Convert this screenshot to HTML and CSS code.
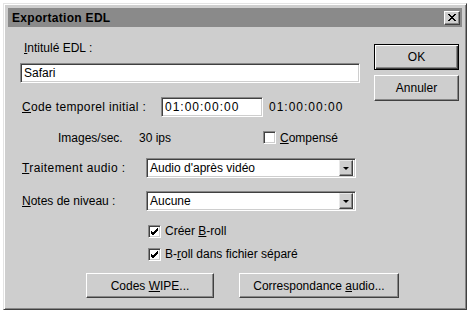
FILE: index.html
```html
<!DOCTYPE html>
<html lang="fr">

<head>
    <meta charset="UTF-8">
    <title>Exportation EDL</title>
    <link rel="stylesheet" href="styles.css">
</head>

<body>
    <div class="window">
        <div class="titlebar">
            <span class="title">Exportation EDL</span>
            <span class="close">
                <svg width="8" height="7" viewBox="0 0 8 7">
                    <path d="M0 0 L7 7 M1 0 L8 7 M7 0 L0 7 M8 0 L1 7" stroke="#000" stroke-width="1" fill="none"/>
                </svg>
            </span>
        </div>

        <div class="content">
            <div class="main">
                <div class="fields">
                    <div class="label-top"><u>I</u>ntitulé EDL :</div>
                    <div class="field name-field">Safari</div>

                    <div class="row code-row">
                        <span class="label code-label"><u>C</u>ode temporel initial :</span>
                        <span class="field tc-field"><span class="tc">01:00:00:00</span></span>
                        <span class="tc tc-end">01:00:00:00</span>
                    </div>

                    <div class="row fps-row">
                        <span class="fps-label">Images/sec.</span>
                        <span class="fps-value">30 ips</span>
                        <span class="check"></span>
                        <span class="check-text"><u>C</u>ompensé</span>
                    </div>

                    <div class="row select-row">
                        <span class="label select-label audio-label"><u>T</u>raitement audio :</span>
                        <span class="field select">
                            <span class="select-text">Audio d'après vidéo</span>
                            <span class="drop"><span class="arrow"></span></span>
                        </span>
                    </div>

                    <div class="row select-row notes-row">
                        <span class="label select-label"><u>N</u>otes de niveau :</span>
                        <span class="field select">
                            <span class="select-text">Aucune</span>
                            <span class="drop"><span class="arrow"></span></span>
                        </span>
                    </div>

                    <div class="row check-row first-check">
                        <span class="check checked">
                            <svg width="9" height="9" viewBox="0 0 9 9">
                                <path d="M1 4 L3 6 L8 1 M1 5 L3 7 L8 2 M1 6 L3 8 L8 3" stroke="#000" stroke-width="1" fill="none"/>
                            </svg>
                        </span>
                        <span class="check-text">Créer <u>B</u>-roll</span>
                    </div>

                    <div class="row check-row">
                        <span class="check checked">
                            <svg width="9" height="9" viewBox="0 0 9 9">
                                <path d="M1 4 L3 6 L8 1 M1 5 L3 7 L8 2 M1 6 L3 8 L8 3" stroke="#000" stroke-width="1" fill="none"/>
                            </svg>
                        </span>
                        <span class="check-text">B-<u>r</u>oll dans fichier séparé</span>
                    </div>
                </div>

                <div class="side">
                    <span class="btn btn-default"><span>OK</span></span>
                    <span class="btn btn-side"><span>Annuler</span></span>
                </div>
            </div>

            <div class="footer">
                <span class="btn btn-wipe"><span>Codes <u>W</u>IPE...</span></span>
                <span class="btn btn-audio"><span>Correspondance <u>a</u>udio...</span></span>
            </div>
        </div>
    </div>
</body>

</html>
```

FILE: styles.css
```css
/* page */
body {
    margin: 0;
    padding: 0;
    background: #ffffff;
    font-family: 'Liberation Sans', Arial, sans-serif;
    font-size: 12px;
    color: #000;
}

u {
    text-decoration: underline;
    text-underline-offset: 1px;
}

/* window frame */
.window {
    margin: 3px;
    width: 464px;
    height: 307px;
    box-sizing: border-box;
    padding: 4px;
    background: #cecece;
    border-top: 1px solid #e4e4e4;
    border-left: 1px solid #e4e4e4;
    border-right: 1px solid #404040;
    border-bottom: 1px solid #404040;
    box-shadow: inset 1px 1px 0 #ffffff, inset -1px -1px 0 #888888;
    display: flex;
    flex-direction: column;
}

.titlebar {
    height: 19px;
    background: #8a8a8a;
    display: flex;
    align-items: center;
    justify-content: space-between;
    padding: 0 2px 0 4px;
}

.title {
    font-weight: bold;
    font-size: 12px;
    letter-spacing: 0.3px;
}

.close {
    width: 16px;
    height: 14px;
    box-sizing: border-box;
    background: #cecece;
    border-top: 1px solid #ffffff;
    border-left: 1px solid #ffffff;
    border-right: 1px solid #404040;
    border-bottom: 1px solid #404040;
    box-shadow: inset -1px -1px 0 #888888;
    display: flex;
    align-items: center;
    justify-content: center;
}

/* dialog body */
.content {
    flex: 1;
    display: flex;
    flex-direction: column;
}

.main {
    display: flex;
}

.fields {
    width: 366px;
    display: flex;
    flex-direction: column;
}

.label-top {
    margin: 13px 0 0 16px;
    height: 16px;
    line-height: 16px;
}

.field {
    background: #fff;
    box-sizing: border-box;
    border-top: 1px solid #888888;
    border-left: 1px solid #888888;
    border-right: 1px solid #ffffff;
    border-bottom: 1px solid #ffffff;
    box-shadow: inset 1px 1px 0 #404040, inset -1px -1px 0 #cecece;
    height: 20px;
    line-height: 18px;
    padding: 0 3px;
    white-space: nowrap;
}

.name-field {
    margin: 7px 0 0 12px;
    width: 340px;
}

.row {
    display: flex;
    align-items: center;
    white-space: nowrap;
}

.code-row {
    margin-top: 14px;
    height: 20px;
}

.code-label {
    margin-left: 14px;
    width: 139px;
    letter-spacing: 0.35px;
}

.tc {
    letter-spacing: 1px;
}

.tc-field {
    width: 102px;
}

.tc-end {
    margin-left: 6px;
}

.fps-row {
    margin-top: 12px;
    height: 17px;
}

.fps-label {
    margin-left: 50px;
    width: 81px;
}

.fps-value {
    width: 124px;
}

/* checkboxes */
.check {
    width: 13px;
    height: 13px;
    box-sizing: border-box;
    background: #fff;
    border-top: 1px solid #888888;
    border-left: 1px solid #888888;
    border-right: 1px solid #ffffff;
    border-bottom: 1px solid #ffffff;
    box-shadow: inset 1px 1px 0 #404040, inset -1px -1px 0 #cecece;
    display: flex;
    align-items: center;
    justify-content: center;
}

.check-text {
    margin-left: 4px;
}

/* dropdowns */
.select-row {
    margin-top: 12px;
    height: 20px;
}

.notes-row {
    margin-top: 13px;
}

.select-label {
    margin-left: 14px;
    width: 124px;
}

.audio-label {
    letter-spacing: 0.4px;
}

.select {
    width: 210px;
    display: flex;
    align-items: center;
    padding: 0 2px 0 3px;
}

.select-text {
    flex: 1;
}

.drop {
    width: 14px;
    height: 16px;
    box-sizing: border-box;
    background: #cecece;
    border-top: 1px solid #e8e8e8;
    border-left: 1px solid #e8e8e8;
    border-right: 1px solid #404040;
    border-bottom: 1px solid #404040;
    box-shadow: inset -1px -1px 0 #888888;
    display: flex;
    align-items: center;
    justify-content: center;
}

.arrow {
    width: 0;
    height: 0;
    border-left: 3px solid transparent;
    border-right: 3px solid transparent;
    border-top: 3px solid #000;
}

.first-check {
    margin-top: 12px;
}

.check-row {
    height: 16px;
    padding-left: 140px;
}

.check-row + .check-row {
    margin-top: 7px;
}

/* buttons */
.btn {
    box-sizing: border-box;
    display: flex;
    align-items: center;
    justify-content: center;
    background: #cecece;
    border-top: 1px solid #ffffff;
    border-left: 1px solid #ffffff;
    border-right: 1px solid #404040;
    border-bottom: 1px solid #404040;
    box-shadow: inset -1px -1px 0 #888888;
    white-space: nowrap;
}

.side {
    display: flex;
    flex-direction: column;
    padding-top: 17px;
}

.btn-default {
    width: 85px;
    height: 26px;
    border: 1px solid #000;
    box-shadow: inset 1px 1px 0 #ffffff, inset -1px -1px 0 #404040, inset -2px -2px 0 #888888;
}

.btn-side {
    margin-top: 5px;
    width: 85px;
    height: 26px;
}

.footer {
    display: flex;
    margin-top: 11px;
}

.btn-wipe {
    margin-left: 78px;
    width: 128px;
    height: 25px;
}

.btn-audio {
    margin-left: 25px;
    width: 160px;
    height: 25px;
}
```
